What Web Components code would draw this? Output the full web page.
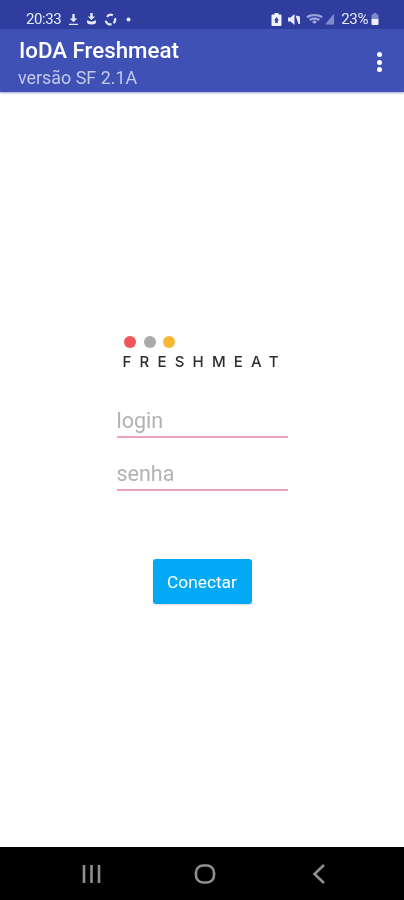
<!DOCTYPE html>
<html lang="pt">
<head>
<meta charset="utf-8">
<title>IoDA Freshmeat</title>
<style>
  html, body { margin: 0; padding: 0; height: 100%; background: #fff; }
  body { font-family: Roboto, "Liberation Sans", sans-serif; }
</style>
</head>
<body>
<ioda-app>
  <ioda-status-bar slot="status"></ioda-status-bar>
  <ioda-toolbar slot="toolbar" title="IoDA Freshmeat" subtitle="versão SF 2.1A"></ioda-toolbar>
  <ioda-login slot="content"></ioda-login>
  <ioda-nav-bar slot="nav"></ioda-nav-bar>
</ioda-app>

<script>
/** App shell: status bar, toolbar, content, system navigation. */
class IodaApp extends HTMLElement {
  constructor() {
    super();
    this.attachShadow({ mode: 'open' });
    this.shadowRoot.innerHTML = `
      <style>
        :host { display: flex; flex-direction: column; width: 404px; height: 900px; overflow: hidden; background: #fff; filter: blur(.4px); }
        .content { flex: 1; min-height: 0; display: flex; flex-direction: column; }
      </style>
      <slot name="status"></slot>
      <slot name="toolbar"></slot>
      <div class="content"><slot name="content"></slot></div>
      <slot name="nav"></slot>`;
  }
}

class IodaStatusBar extends HTMLElement {
  constructor() {
    super();
    this.attachShadow({ mode: 'open' });
    this.shadowRoot.innerHTML = `
      <style>
        :host { display: flex; align-items: center; justify-content: space-between; height: 29px; box-sizing: border-box;
          padding: 0 25px 0 26px; background: #2f3d9e; color: #e6e9f8; font: 400 15px Roboto, sans-serif; letter-spacing: -0.4px; }
        .group { display: flex; align-items: center; gap: 6px; padding-top: 9px; }
        .group.right { gap: 2px; }
        svg { display: block; }
        .pct { margin-left: 4px; }
      </style>
      <div class="group">
        <span style="margin-right:1px">20:33</span>
        <svg width="11" height="13" viewBox="0 0 11 13" fill="#e6e9f8"><path d="M4.300 1h2.400v4.500h2.600L5.500 9.200 1.700 5.500h2.600zM1 10.700h9v1.300H1z"/></svg>
        <svg width="11" height="12" viewBox="0 0 11 12" fill="#e6e9f8" style="margin-left:1px"><path d="M4.300 0h2.400v3.600h2.400L5.500 7 1.900 3.600h2.400zM1 7.200 5.500 8.800 10 7.200 10 9.500c0 1-2 2-4.500 2S1 10.500 1 9.500z"/></svg>
        <svg width="13" height="13" viewBox="0 0 13 13" fill="none" stroke="#e6e9f8" stroke-width="2.300" style="margin-left:1px"><path d="M3 3.800A4.800 4.800 0 0 1 8.800 2.200M10.900 5.200A4.800 4.800 0 0 1 9.500 10.200M7.500 11.200A4.800 4.800 0 0 1 1.700 7.700"/></svg>
        <svg width="5" height="5" viewBox="0 0 5 5" fill="#e6e9f8" style="margin-left:3px"><circle cx="2.500" cy="2.500" r="2"/></svg>
      </div>
      <div class="group right">
        <svg width="11" height="13" viewBox="0 0 11 13"><path fill="#f0f2fb" d="M3.500 0h4v1.500H9.500a1 1 0 0 1 1 1V12a1 1 0 0 1-1 1h-8a1 1 0 0 1-1-1V2.500a1 1 0 0 1 1-1h2z"/><path fill="#3a4aa8" d="M5.500 4 8 7.500H6.800V10H4.200V7.500H3z"/></svg>
        <svg width="14" height="13" viewBox="0 0 14 13" fill="#e6e9f8" style="margin-left:3px"><path d="M1 4.500h2.500L7.500 1v11L3.500 8.500H1z"/><path d="M8.500 2.500 13 3.500V11H11.500z"/></svg>
        <svg width="17" height="11" viewBox="0 0 18 12" fill="#9aa4d8" style="margin-left:3px"><path d="M0 2.500C5 -.800 13 -.800 18 2.500L16.500 4.500C12 1.800 6 1.800 1.500 4.500z"/><path d="M3 5.500C6.500 3.300 11.500 3.300 15 5.500L13.500 7.500C11 6 7 6 4.500 7.500z"/><path d="M6 8.500 9 6.800 12 8.500 9 11z"/></svg>
        <svg width="10" height="12" viewBox="0 0 11 12" fill="#7f8bcb"><path d="M10 0v12H0z"/></svg>
        <span class="pct">23%</span>
        <svg width="8" height="12" viewBox="0 0 8 12" style="margin-left:1px"><path fill="#7f8bcb" d="M2.500 0h3v1.500H7.500V6H.5V1.500h2z"/><path fill="#eef0fa" d="M.5 6h7v5a1 1 0 0 1-1 1h-5a1 1 0 0 1-1-1z"/></svg>
      </div>`;
  }
}

class IodaToolbar extends HTMLElement {
  constructor() {
    super();
    this.attachShadow({ mode: 'open' });
    const title = this.getAttribute('title') || '';
    const subtitle = this.getAttribute('subtitle') || '';
    this.shadowRoot.innerHTML = `
      <style>
        :host { display: flex; align-items: flex-start; justify-content: space-between; height: 63px; box-sizing: border-box;
          padding: 9px 22px 0 19px; background: #3f51b5; color: #fff; position: relative; z-index: 1;
          box-shadow: 0 1px 2px rgba(40, 50, 140, .45); font-family: Roboto, sans-serif; }
        .title { font-size: 22.300px; line-height: 25px; font-weight: 500; }
        .subtitle { font-size: 17.900px; line-height: 22px; margin-top: 4px; margin-left: -1px; color: #c2c9ea; }
        .more { display: flex; flex-direction: column; gap: 2.500px; padding-top: 14px; }
        .more i { display: block; width: 5px; height: 5px; border-radius: 50%; background: #fff; }
      </style>
      <div>
        <div class="title">${title}</div>
        <div class="subtitle">${subtitle}</div>
      </div>
      <div class="more"><i></i><i></i><i></i></div>`;
  }
}

class IodaLogo extends HTMLElement {
  constructor() {
    super();
    this.attachShadow({ mode: 'open' });
    this.shadowRoot.innerHTML = `
      <style>
        :host { display: flex; flex-direction: column; gap: 6px; padding-left: 6px; }
        .dots { display: flex; gap: 7.500px; padding-left: 1.500px; }
        .dots i { display: block; width: 12px; height: 12px; border-radius: 50%; }
        .word { font: 500 15px/16px Inter, "Open Sans", sans-serif; letter-spacing: 8.200px; color: #2d2d2d; white-space: nowrap; }
      </style>
      <div class="dots">
        <i style="background:#f25557"></i><i style="background:#a9a9a9"></i><i style="background:#f7b733"></i>
      </div>
      <div class="word">FRESHMEAT</div>`;
  }
}

class IodaField extends HTMLElement {
  constructor() {
    super();
    this.attachShadow({ mode: 'open' });
    this.shadowRoot.innerHTML = `
      <style>
        :host { display: block; width: 171px; border-bottom: 2px solid #e8a3ba; }
        .hint { font: 400 21.500px/28px Roboto, sans-serif; color: #b2b2b2; padding-bottom: 1px; display: block; }
      </style>
      <span class="hint">${this.getAttribute('hint') || ''}</span>`;
  }
}

class IodaButton extends HTMLElement {
  constructor() {
    super();
    this.attachShadow({ mode: 'open' });
    this.shadowRoot.innerHTML = `
      <style>
        :host { display: flex; align-items: center; justify-content: center; width: 99px; height: 45px; border-radius: 3px;
          background: #03a9f4; color: #fff; font: 400 17.300px Roboto, sans-serif;
          box-shadow: 0 1px 2px rgba(0, 0, 0, .15); }
      </style>
      <slot></slot>`;
  }
}

class IodaLogin extends HTMLElement {
  constructor() {
    super();
    this.attachShadow({ mode: 'open' });
    this.shadowRoot.innerHTML = `
      <style>
        :host { display: flex; flex-direction: column; align-items: center; flex: 1; padding-top: 244px; }
        .form { display: flex; flex-direction: column; width: 171px; }
        ioda-logo { margin-bottom: 37px; }
        ioda-field + ioda-field { margin-top: 22px; }
        ioda-button { margin-top: 68px; }
      </style>
      <div class="form">
        <ioda-logo></ioda-logo>
        <ioda-field hint="login"></ioda-field>
        <ioda-field hint="senha"></ioda-field>
      </div>
      <ioda-button>Conectar</ioda-button>`;
  }
}

class IodaNavBar extends HTMLElement {
  constructor() {
    super();
    this.attachShadow({ mode: 'open' });
    this.shadowRoot.innerHTML = `
      <style>
        :host { display: flex; align-items: center; justify-content: space-between; height: 53px; box-sizing: border-box;
          padding: 0 78px 0 82px; background: #000; }
        svg { display: block; fill: none; stroke: #8f8f8f; stroke-width: 2.600; }
        .home { margin-left: -4px; }
      </style>
      <svg width="19" height="20" viewBox="0 0 19 20"><path d="M2 1v18M9.500 1v18M17 1v18"/></svg>
      <svg class="home" width="22" height="20" viewBox="0 0 22 20"><rect x="2" y="1.500" width="18" height="17" rx="7"/></svg>
      <svg width="14" height="20" viewBox="0 0 14 20"><path d="M12 1 2.500 10 12 19"/></svg>`;
  }
}

customElements.define('ioda-logo', IodaLogo);
customElements.define('ioda-field', IodaField);
customElements.define('ioda-button', IodaButton);
customElements.define('ioda-login', IodaLogin);
customElements.define('ioda-status-bar', IodaStatusBar);
customElements.define('ioda-toolbar', IodaToolbar);
customElements.define('ioda-nav-bar', IodaNavBar);
customElements.define('ioda-app', IodaApp);
</script>
</body>
</html>
